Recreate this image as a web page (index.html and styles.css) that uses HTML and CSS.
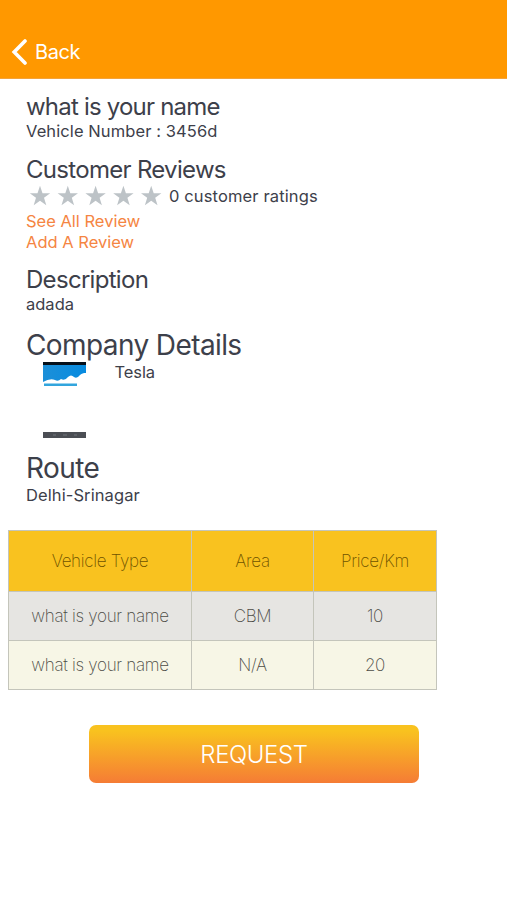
FILE: index.html
```html
<!DOCTYPE html>
<html lang="en">
<head>
<meta charset="utf-8">
<title>Vehicle details</title>
<link rel="stylesheet" href="styles.css">
</head>
<body>
<header class="bar">
  <svg class="chevron" viewBox="0 0 16 26"><path d="M14 2 3.2 13 14 24" fill="none" stroke="#fff" stroke-width="3.6" stroke-linecap="round" stroke-linejoin="miter"/></svg>
  <span class="back">Back</span>
</header>
<main class="content">
  <section class="block">
    <h2 class="title t-name">what is your name</h2>
    <p class="text t-number">Vehicle Number : 3456d</p>
  </section>
  <section class="block reviews">
    <h2 class="title">Customer Reviews</h2>
    <div class="rating">
      <svg class="stars" viewBox="0 0 134 22" fill="#bdc3c7">
        <defs><path id="star" d="M11 .8 13.5 8.2H21.2L15 12.8 17.3 20.2 11 15.7 4.7 20.2 7 12.8 .8 8.2H8.5Z"/></defs>
        <use href="#star" x="0"/><use href="#star" x="27.8"/><use href="#star" x="55.6"/><use href="#star" x="83.4"/><use href="#star" x="111.2"/>
      </svg>
      <span class="text t-count">0 customer ratings</span>
    </div>
    <a class="text link">See All Review</a>
    <a class="text link">Add A Review</a>
  </section>
  <section class="block">
    <h2 class="title">Description</h2>
    <p class="text">adada</p>
  </section>
  <section class="block company">
    <h2 class="title large">Company Details</h2>
    <div class="company-row">
      <svg class="thumb" viewBox="0 0 43 77">
        <defs><linearGradient id="sky" x1="0" x2="1"><stop offset="0" stop-color="#1c8fd8"/><stop offset="1" stop-color="#078be0"/></linearGradient></defs>
        <path fill="url(#sky)" d="M0 1H43V11C40 11 39 11.5 37 13Q34 17 31 15Q28 12 25 15Q22 19 18 17Q15 20 12 18Q7 16 0 20Z"/>
        <path fill="#05101b" d="M0 0H43V3H0Z"/>
        <path fill="#32a5dd" d="M1 21.5H34V24H1Z"/>
        <path fill="#4b4e54" d="M0 70H43V76H0Z"/>
        <path stroke="#70747a" d="M10 73h3M20 73h4M31 73h3"/>
      </svg>
      <span class="text t-tesla">Tesla</span>
    </div>
  </section>
  <section class="block">
    <h2 class="title large">Route</h2>
    <p class="text t-number">Delhi-Srinagar</p>
  </section>
</main>
<div class="table">
  <div class="cell head">Vehicle Type</div><div class="cell head">Area</div><div class="cell head">Price/Km</div>
  <div class="cell gray">what is your name</div><div class="cell gray">CBM</div><div class="cell gray">10</div>
  <div class="cell cream">what is your name</div><div class="cell cream">N/A</div><div class="cell cream">20</div>
</div>
<button class="request">REQUEST</button>
</body>
</html>
```
FILE: styles.css
```css
* { box-sizing: border-box; }
body { margin: 0; height: 900px; background: #fff; color: #3d404a; font-family: Inter, "Liberation Sans", sans-serif; overflow: hidden; }
h2, p { margin: 0; font-weight: 400; }
.bar { height: 79px; padding: 39px 0 0 11px; background: #ff9800; border-bottom: 1px solid #f3a33b; display: flex; align-items: flex-start; gap: 8px; color: #fff; }
.chevron { width: 16px; height: 26px; }
.back { font-size: 20px; line-height: 26px; letter-spacing: -.4px; }
.content { padding: 12px 0 0 26px; }
.block { margin-bottom: 13px; }
.title { height: 30px; font-size: 24px; line-height: 32px; letter-spacing: -.7px; white-space: nowrap; }
.t-name { letter-spacing: -.8px; }
.large { height: 35px; font-size: 28px; line-height: 37px; letter-spacing: -.6px; }
.text { display: block; font-size: 16.5px; line-height: 20px; white-space: nowrap; }
.t-number { letter-spacing: .09px; }
.t-count { letter-spacing: .13px; }
.t-tesla { letter-spacing: -.1px; }
.rating { display: flex; align-items: center; height: 27px; padding: 0 0 3px 3px; gap: 6px; }
.stars { width: 134px; height: 22px; }
.link { color: #f58542; line-height: 20.5px; }
.reviews { margin-bottom: 12px; }
.company { height: 110px; }
.company-row { display: flex; gap: 29px; padding-left: 16.5px; }
.thumb { width: 43px; height: 77px; flex: none; }
.table { display: grid; grid-template-columns: 182px 121px 122px; grid-template-rows: 60px 48px 48px; gap: 1px; width: 429px; margin: 25px 0 0 8px; padding: 1px; background: #c4c5bb; }
.cell { display: flex; align-items: center; justify-content: center; font-size: 17px; font-weight: 200; letter-spacing: -.3px; color: #4c4c45; }
.head { background: #f9c21f; color: #6f5300; }
.gray { background: #e6e5e2; }
.cream { background: #f7f6e6; }
.request { display: block; width: 330px; height: 58px; margin: 35px 0 0 89px; padding: 0; border: 0; border-radius: 7px; background: linear-gradient(#f9c21f 10%, #f57c35); color: #fff; font: 300 24px Inter, "Liberation Sans", sans-serif; letter-spacing: -.4px; }
```
